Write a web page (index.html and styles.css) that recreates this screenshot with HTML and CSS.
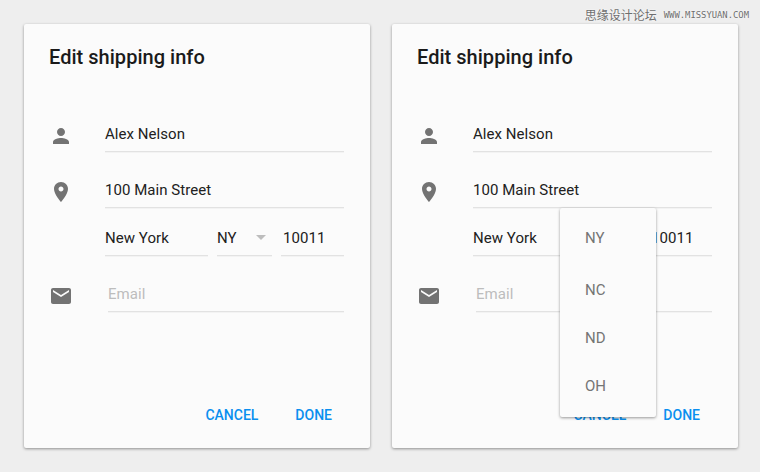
FILE: index.html
```html
<!DOCTYPE html>
<html lang="en">
<head>
<meta charset="utf-8">
<title>Edit shipping info</title>
<link rel="stylesheet" href="styles.css">
</head>
<body>
<header class="topbar">
  <span class="mark-cn">思缘设计论坛</span>
  <span class="mark-en">WWW.MISSYUAN.COM</span>
</header>
<main class="cards">
  <section class="card">
    <h2 class="title">Edit shipping info</h2>
    <div class="form">
      <div class="row">
        <svg class="icon" viewBox="0 0 24 24"><path d="M12 12c2.21 0 4-1.79 4-4s-1.79-4-4-4-4 1.79-4 4 1.79 4 4 4zm0 2c-2.67 0-8 1.34-8 4v2h16v-2c0-2.66-5.33-4-8-4z"/></svg>
        <div class="field">Alex Nelson</div>
      </div>
      <div class="row">
        <svg class="icon" viewBox="0 0 24 24"><path d="M12 2C8.13 2 5 5.13 5 9c0 5.25 7 13 7 13s7-7.75 7-13c0-3.87-3.13-7-7-7zm0 9.5c-1.38 0-2.5-1.12-2.5-2.5s1.12-2.5 2.5-2.5 2.5 1.12 2.5 2.5-1.12 2.5-2.5 2.5z"/></svg>
        <div class="field">100 Main Street</div>
      </div>
      <div class="row row-short">
        <div class="icon-space"></div>
        <div class="field field-city">New York</div>
        <div class="field field-state">NY<span class="caret"></span></div>
        <div class="field field-zip">10011</div>
      </div>
      <div class="row">
        <svg class="icon" viewBox="0 0 24 24"><path d="M20 4H4c-1.1 0-2 .9-2 2v12c0 1.1.9 2 2 2h16c1.1 0 2-.9 2-2V6c0-1.1-.9-2-2-2zm0 4l-8 5-8-5V6l8 5 8-5v2z"/></svg>
        <div class="field field-empty">Email</div>
      </div>
    </div>
    <div class="actions">
      <span class="action">CANCEL</span>
      <span class="action">DONE</span>
    </div>
  </section>
  <section class="card">
    <h2 class="title">Edit shipping info</h2>
    <div class="form">
      <div class="row">
        <svg class="icon" viewBox="0 0 24 24"><path d="M12 12c2.21 0 4-1.79 4-4s-1.79-4-4-4-4 1.79-4 4 1.79 4 4 4zm0 2c-2.67 0-8 1.34-8 4v2h16v-2c0-2.66-5.33-4-8-4z"/></svg>
        <div class="field">Alex Nelson</div>
      </div>
      <div class="row">
        <svg class="icon" viewBox="0 0 24 24"><path d="M12 2C8.13 2 5 5.13 5 9c0 5.25 7 13 7 13s7-7.75 7-13c0-3.87-3.13-7-7-7zm0 9.5c-1.38 0-2.5-1.12-2.5-2.5s1.12-2.5 2.5-2.5 2.5 1.12 2.5 2.5-1.12 2.5-2.5 2.5z"/></svg>
        <div class="field">100 Main Street</div>
      </div>
      <div class="row row-short">
        <div class="icon-space"></div>
        <div class="field field-city">New York</div>
        <div class="field field-state">NY</div>
        <div class="field field-zip">10011</div>
      </div>
      <div class="row">
        <svg class="icon" viewBox="0 0 24 24"><path d="M20 4H4c-1.1 0-2 .9-2 2v12c0 1.1.9 2 2 2h16c1.1 0 2-.9 2-2V6c0-1.1-.9-2-2-2zm0 4l-8 5-8-5V6l8 5 8-5v2z"/></svg>
        <div class="field field-empty">Email</div>
      </div>
    </div>
    <div class="actions">
      <span class="action">CANCEL</span>
      <span class="action">DONE</span>
    </div>
    <ul class="menu">
      <li class="menu-item menu-item-first">NY</li>
      <li class="menu-item">NC</li>
      <li class="menu-item">ND</li>
      <li class="menu-item">OH</li>
    </ul>
  </section>
</main>
</body>
</html>
```
FILE: styles.css
```css
* {
  box-sizing: border-box;
}

html,
body {
  margin: 0;
  height: 100%;
}

body {
  background: #eeeeee;
  font-family: Roboto, "Noto Sans CJK SC", sans-serif;
  overflow: hidden;
}

.topbar {
  display: flex;
  justify-content: flex-end;
  align-items: center;
  gap: 7px;
  height: 24px;
  padding: 6px 11px 0 0;
  color: #6e6e6e;
}

.mark-cn {
  font-family: "Noto Sans CJK SC", sans-serif;
  font-size: 12px;
  line-height: 14px;
  text-shadow: 0 0 2px #ffffff;
}

.mark-en {
  font-family: "DejaVu Sans Mono", monospace;
  font-size: 8.85px;
  line-height: 14px;
  text-shadow: 0 0 2px #ffffff;
}

.cards {
  display: flex;
  gap: 22px;
  padding-left: 24px;
}

.card {
  position: relative;
  display: flex;
  flex-direction: column;
  width: 346px;
  height: 424px;
  padding: 0 26px 23px 25px;
  background: #fbfbfb;
  border-radius: 2px;
  box-shadow: 0 1px 3px rgba(0, 0, 0, 0.4);
}

.title {
  margin: 0;
  padding-top: 19px;
  font-size: 20px;
  line-height: 28px;
  font-weight: 500;
  letter-spacing: 0.03px;
  color: #1a1a1a;
}

.form {
  margin-top: 25px;
}

.row {
  display: flex;
  align-items: flex-end;
  height: 56px;
}

.row-short {
  height: 48px;
}

.icon {
  flex: none;
  width: 24px;
  height: 24px;
  margin: 0 32px 4px 0;
  fill: #737373;
}

.icon-space {
  flex: none;
  width: 56px;
}

.field {
  position: relative;
  flex: 1;
  height: 31px;
  padding-top: 2px;
  border-bottom: 1px solid #e2e2e2;
  box-shadow: 0 1px 0 #f3f3f3;
  font-size: 15px;
  line-height: 22px;
  letter-spacing: 0.05px;
  color: #212121;
}

.field-city {
  flex: none;
  width: 103px;
}

.field-state {
  flex: none;
  width: 55px;
  margin-left: 9px;
}

.field-zip {
  flex: none;
  width: 63px;
  margin-left: 9px;
  padding-left: 2px;
}

.field-empty {
  margin-left: 3px;
  color: #bdbdbd;
}

.caret {
  position: absolute;
  left: 39px;
  top: 10px;
  width: 0;
  height: 0;
  border-left: 5.5px solid transparent;
  border-right: 5.5px solid transparent;
  border-top: 5px solid #bdbdbd;
}

.actions {
  display: flex;
  justify-content: flex-end;
  gap: 37px;
  margin-top: auto;
  padding-right: 12px;
}

.action {
  font-size: 14px;
  line-height: 20px;
  font-weight: 500;
  color: #0a8fef;
}

.menu {
  position: absolute;
  left: 168px;
  top: 184px;
  width: 96px;
  height: 209px;
  margin: 0;
  padding: 6px 0 0 25px;
  list-style: none;
  background: #fbfbfb;
  border-radius: 2px;
  box-shadow: 0 1px 3px rgba(0, 0, 0, 0.4);
}

.menu-item {
  height: 48px;
  font-size: 15px;
  line-height: 48px;
  color: #757575;
}

.menu-item-first {
  margin-bottom: 4px;
}
```
